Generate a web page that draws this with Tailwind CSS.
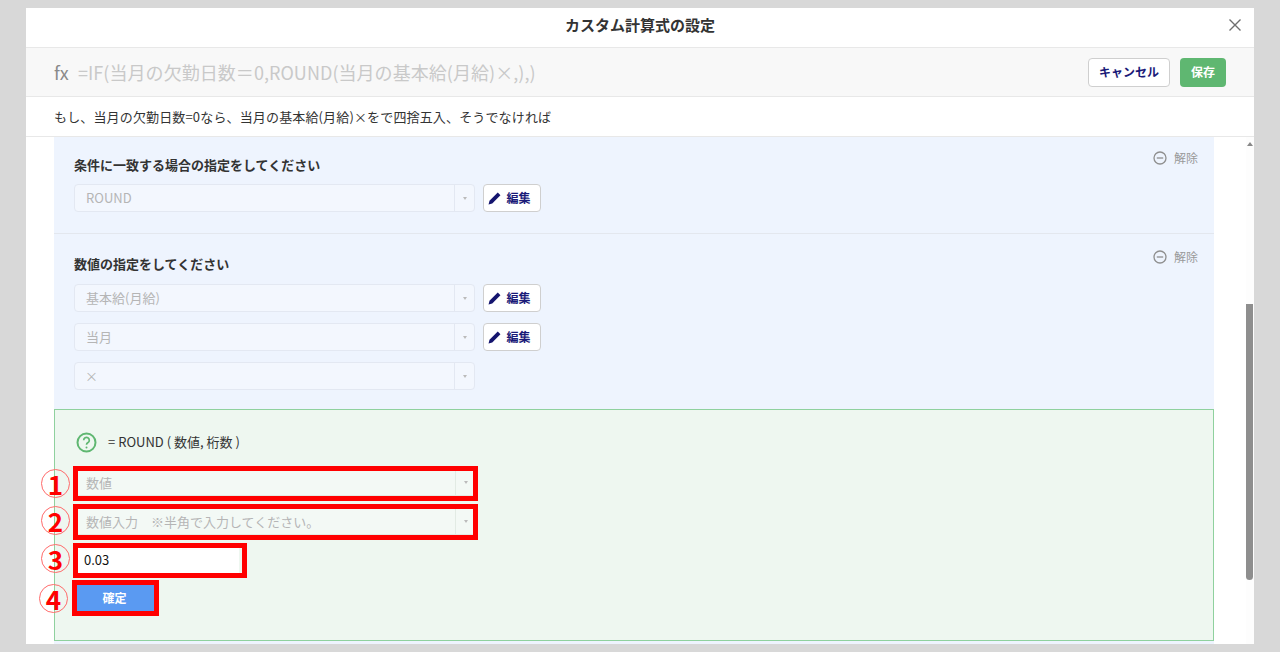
<!DOCTYPE html>
<html lang="ja">
<head>
<meta charset="utf-8">
<script src="https://cdn.jsdelivr.net/npm/@tailwindcss/browser@4"></script>
</head>
<body class="m-0 h-[652px] w-[1280px] overflow-hidden bg-[#d8d8d8] font-['Noto_Sans_CJK_JP','Noto_Sans',sans-serif] text-[#333]">
<div class="mx-[26px] mt-2 flex h-[636px] w-[1228px] flex-col bg-white">
  <header class="relative flex h-10 shrink-0 items-center justify-center border-b border-[#e8e8e8] pb-1">
    <h1 class="text-[15px] font-bold text-[#333]">カスタム計算式の設定</h1>
    <svg class="absolute left-[1203px] top-[11px] h-3 w-3" viewBox="0 0 12 12" fill="none" stroke="#6f6f6f" stroke-width="1.4"><path d="M0.5 0.5L11.5 11.5M11.5 0.5L0.5 11.5"/></svg>
  </header>
  <div class="flex h-[49px] shrink-0 items-center border-b border-[#e8e8e8] bg-[#f8f8f8] pl-7 pr-7">
    <span class="w-6 text-[18px] leading-none text-[#8a8a8a]">fx</span>
    <span class="text-[18px] tracking-[0.05px] text-[#c9c9c9]">=IF(当月の欠勤日数＝0,ROUND(当月の基本給(月給)×,),)</span>
    <div class="ml-auto flex items-center gap-[10px]">
      <button class="h-[29px] w-[82px] rounded-[4px] border border-[#cfcfcf] bg-white text-[12px] font-bold text-[#1a1a78]">キャンセル</button>
      <button class="h-[29px] w-[46px] rounded-[4px] bg-[#5fb771] text-[12px] font-bold text-white">保存</button>
    </div>
  </div>
  <p class="flex h-10 shrink-0 items-center border-b border-[#e8e8e8] pl-7 text-[13px] tracking-[0.15px] text-[#333]">もし、当月の欠勤日数=0なら、当月の基本給(月給)×をで四捨五入、そうでなければ</p>
  <div class="relative flex min-h-0 flex-1">
    <div class="ml-7 w-[1160px] bg-[#eef4fe]">
      <section class="relative h-[97px] border-b border-[#e3e7ee] pl-5 pt-5">
        <h2 class="h-[27px] text-[13px] font-bold leading-4 text-[#333]">条件に一致する場合の指定をしてください</h2>
        <div class="flex items-center gap-2">
          <div class="flex h-7 w-[401px] items-center justify-between rounded-[4px] border border-[#e3e8f2] bg-[#f3f7fe] text-[13px] text-[#b5b5b5]"><span class="pl-[11px]">ROUND</span><span class="flex h-full w-5 items-center justify-center border-l border-[#e3e8f2]"><i class="block h-0 w-0 border-x-[2.5px] border-t-[3px] border-x-transparent border-t-[#bbb]"></i></span></div>
          <button class="flex h-7 w-[58px] items-center justify-center gap-[5px] rounded-[4px] border border-[#cfcfcf] bg-white pr-[5px] text-[12px] font-bold text-[#1a1a78]"><svg class="h-[13px] w-[13px]" viewBox="0 0 12 12" fill="#14146e"><path d="M9 .5l2.5 2.5-7.6 7.6-3.4 .9 .9-3.4z"/></svg>編集</button>
        </div>
        <span class="absolute left-[1099px] top-[12px] flex items-center gap-[7px] text-[12px] text-[#999]"><svg class="h-[14px] w-[14px]" viewBox="0 0 14 14" fill="none" stroke="#8f8f8f" stroke-width="1.3"><circle cx="7" cy="7" r="6"/><path d="M3.8 7h6.4"/></svg>解除</span>
      </section>
      <section class="relative h-[175px] pl-5 pt-[22px]">
        <h2 class="h-[28px] text-[13px] font-bold leading-4 text-[#333]">数値の指定をしてください</h2>
        <div class="flex flex-col gap-[11px]">
          <div class="flex items-center gap-2">
            <div class="flex h-7 w-[401px] items-center justify-between rounded-[4px] border border-[#e3e8f2] bg-[#f3f7fe] text-[13px] text-[#b5b5b5]"><span class="pl-[11px]">基本給(月給)</span><span class="flex h-full w-5 items-center justify-center border-l border-[#e3e8f2]"><i class="block h-0 w-0 border-x-[2.5px] border-t-[3px] border-x-transparent border-t-[#bbb]"></i></span></div>
            <button class="flex h-7 w-[58px] items-center justify-center gap-[5px] rounded-[4px] border border-[#cfcfcf] bg-white pr-[5px] text-[12px] font-bold text-[#1a1a78]"><svg class="h-[13px] w-[13px]" viewBox="0 0 12 12" fill="#14146e"><path d="M9 .5l2.5 2.5-7.6 7.6-3.4 .9 .9-3.4z"/></svg>編集</button>
          </div>
          <div class="flex items-center gap-2">
            <div class="flex h-7 w-[401px] items-center justify-between rounded-[4px] border border-[#e3e8f2] bg-[#f3f7fe] text-[13px] text-[#b5b5b5]"><span class="pl-[11px]">当月</span><span class="flex h-full w-5 items-center justify-center border-l border-[#e3e8f2]"><i class="block h-0 w-0 border-x-[2.5px] border-t-[3px] border-x-transparent border-t-[#bbb]"></i></span></div>
            <button class="flex h-7 w-[58px] items-center justify-center gap-[5px] rounded-[4px] border border-[#cfcfcf] bg-white pr-[5px] text-[12px] font-bold text-[#1a1a78]"><svg class="h-[13px] w-[13px]" viewBox="0 0 12 12" fill="#14146e"><path d="M9 .5l2.5 2.5-7.6 7.6-3.4 .9 .9-3.4z"/></svg>編集</button>
          </div>
          <div class="flex h-7 w-[401px] items-center justify-between rounded-[4px] border border-[#e3e8f2] bg-[#f3f7fe] text-[13px] text-[#b5b5b5]"><span class="pl-[10px]">×</span><span class="flex h-full w-5 items-center justify-center border-l border-[#e3e8f2]"><i class="block h-0 w-0 border-x-[2.5px] border-t-[3px] border-x-transparent border-t-[#bbb]"></i></span></div>
        </div>
        <span class="absolute left-[1099px] top-[14px] flex items-center gap-[7px] text-[12px] text-[#999]"><svg class="h-[14px] w-[14px]" viewBox="0 0 14 14" fill="none" stroke="#8f8f8f" stroke-width="1.3"><circle cx="7" cy="7" r="6"/><path d="M3.8 7h6.4"/></svg>解除</span>
      </section>
      <section class="h-[232px] border border-[#8fd19e] bg-[#eef7f0] pl-[21px] pt-[21px]">
        <div class="flex h-[22px] items-center gap-[11px] text-[13px] text-[#333]">
          <svg class="h-[21px] w-[21px]" viewBox="0 0 21 21" fill="none" stroke="#5fb771" stroke-width="2"><circle cx="10.5" cy="10.5" r="9"/><path d="M7.7 8.2a2.8 2.8 0 1 1 4.3 2.4c-1 .6-1.5 1.1-1.5 2.2" stroke-width="1.7"/><circle cx="10.5" cy="15.4" r="1" fill="#5fb771" stroke="none"/></svg>
          <span>= ROUND ( 数値, 桁数 )</span>
        </div>
        <div class="-ml-px mt-[15px] flex flex-col gap-[11px]">
          <div class="flex h-7 w-[401px] items-center justify-between rounded-[4px] border border-[#e2ebe4] bg-[#f3f9f5] pt-px text-[13px] text-[#b5b5b5]"><span class="pl-[10px]">数値</span><span class="flex h-full w-5 items-center justify-center border-l border-[#e2ebe4]"><i class="block h-0 w-0 border-x-[2.5px] border-t-[3px] border-x-transparent border-t-[#bbb]"></i></span></div>
          <div class="flex h-7 w-[401px] items-center justify-between rounded-[4px] border border-[#e2ebe4] bg-[#f3f9f5] pt-px text-[13px] text-[#b5b5b5]"><span class="pl-[10px]">数値入力　※半角で入力してください。</span><span class="flex h-full w-5 items-center justify-center border-l border-[#e2ebe4]"><i class="block h-0 w-0 border-x-[2.5px] border-t-[3px] border-x-transparent border-t-[#bbb]"></i></span></div>
          <div class="flex h-7 w-[164px] items-center bg-white pl-[9px] text-[13px] text-[#111]">0.03</div>
          <button class="-ml-px h-[26px] w-[81px] bg-[#5a9af2] text-[12px] font-bold text-white">確定</button>
        </div>
      </section>
    </div>
    <div class="absolute left-[1220px] top-0 h-full w-2 bg-[#fdfdfd]">
      <i class="absolute left-[1px] top-[5px] block h-0 w-0 border-x-[3.5px] border-b-[4px] border-x-transparent border-b-[#888]"></i>
      <div class="absolute left-0 top-[167px] h-[276px] w-[7px] rounded-b-[4px] bg-[#8e8e8e]"></div>
    </div>
  </div>
</div>
<!-- annotation overlays -->
<div class="absolute left-[73px] top-[466px] h-[35px] w-[405px] border-[5px] border-[#ff0000]"></div>
<div class="absolute left-[73px] top-[504px] h-[36px] w-[405px] border-[5px] border-[#ff0000]"></div>
<div class="absolute left-[73px] top-[543px] h-[35px] w-[174px] border-[5px] border-[#ff0000]"></div>
<div class="absolute left-[72px] top-[580px] h-[36px] w-[87px] border-[5px] border-[#ff0000]"></div>
<div class="absolute left-[41px] top-[469px] flex h-[29px] w-[29px] items-center justify-center rounded-full border border-[#ff6a6a] text-[26px] font-bold leading-none text-[#ff0000]">1</div>
<div class="absolute left-[41px] top-[506px] flex h-[29px] w-[29px] items-center justify-center rounded-full border border-[#ff6a6a] text-[26px] font-bold leading-none text-[#ff0000]">2</div>
<div class="absolute left-[41px] top-[544px] flex h-[29px] w-[29px] items-center justify-center rounded-full border border-[#ff6a6a] text-[26px] font-bold leading-none text-[#ff0000]">3</div>
<div class="absolute left-[39px] top-[584px] flex h-[29px] w-[29px] items-center justify-center rounded-full border border-[#ff6a6a] text-[26px] font-bold leading-none text-[#ff0000]">4</div>
</body>
</html>
